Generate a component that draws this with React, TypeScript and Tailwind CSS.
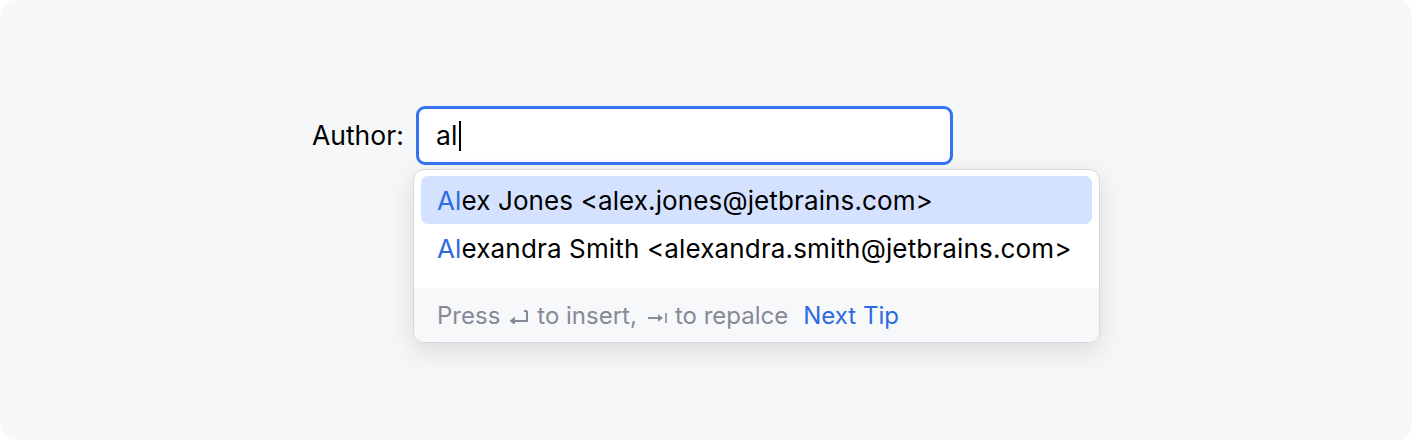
import React from "react";

function EnterIcon() {
  return (
    <svg width="20" height="14" viewBox="0 0 20 14" fill="none">
      <path d="M18 1v10H5" stroke="#858a96" strokeWidth="2" />
      <path d="M15 1h3" stroke="#858a96" strokeWidth="2" />
      <path d="M0.5 11 6 6.8v8.4z" fill="#858a96" />
    </svg>
  );
}

function TabIcon() {
  return (
    <svg width="20" height="12" viewBox="0 0 20 12" fill="none">
      <path d="M1 6h11" stroke="#858a96" strokeWidth="2" />
      <path d="M16 6 11 2.2v7.6z" fill="#858a96" />
      <path d="M19 1v10" stroke="#858a96" strokeWidth="1.6" />
    </svg>
  );
}

export default function App() {
  return (
    <div className="w-[1412px] h-[440px] bg-white" style={{ fontFamily: "Inter, 'Noto Sans', sans-serif" }}>
      <div className="w-full h-full rounded-[16px] bg-[#f6f7f9] pt-[106px] pl-[312px] flex">
        <div className="flex items-start gap-[12px]">
          <div className="w-[92px] h-[59px] flex items-center text-[26.5px] text-[#000] whitespace-nowrap">Author:</div>
          <div className="relative">
            <div className="w-[537px] h-[59px] rounded-[9px] border-[3px] border-[#3574f0] bg-white flex items-center pl-[17px] text-[26.5px] text-[#000]">
              <span>al</span>
              <span className="ml-[2px] w-[2px] h-[30px] bg-[#000]" />
            </div>
            <div className="absolute left-[-3px] top-[63px] w-[687px] h-[174px] rounded-[11px] border border-[#d6d8dd] bg-white shadow-[0_8px_28px_rgba(0,0,0,0.12)] overflow-hidden flex flex-col">
              <div className="px-[7px] pt-[6px]">
                <div className="h-[48px] rounded-[7px] bg-[#d4e2ff] flex items-center pl-[16px] text-[26px] tracking-[0.12px] text-[#000] whitespace-nowrap">
                  <span className="text-[#2f6be0]">Al</span>ex Jones &lt;alex.jones@jetbrains.com&gt;
                </div>
                <div className="h-[48px] flex items-center pl-[16px] text-[26px] tracking-[0.15px] text-[#000] whitespace-nowrap">
                  <span className="text-[#2f6be0]">Al</span>exandra Smith &lt;alexandra.smith@jetbrains.com&gt;
                </div>
              </div>
              <div className="mt-auto h-[54px] bg-[#f7f8fa] flex items-center pl-[23px] pt-[2px] text-[24px] text-[#858a96] whitespace-nowrap">
                <span>Press</span>
                <span className="ml-[9px] mr-[8px] flex items-center pt-[2px]"><EnterIcon /></span>
                <span>to insert,</span>
                <span className="ml-[10px] mr-[8px] flex items-center pt-[3px]"><TabIcon /></span>
                <span>to repalce</span>
                <span className="ml-[15px] text-[#2f6be0]">Next Tip</span>
              </div>
            </div>
          </div>
        </div>
      </div>
    </div>
  );
}
